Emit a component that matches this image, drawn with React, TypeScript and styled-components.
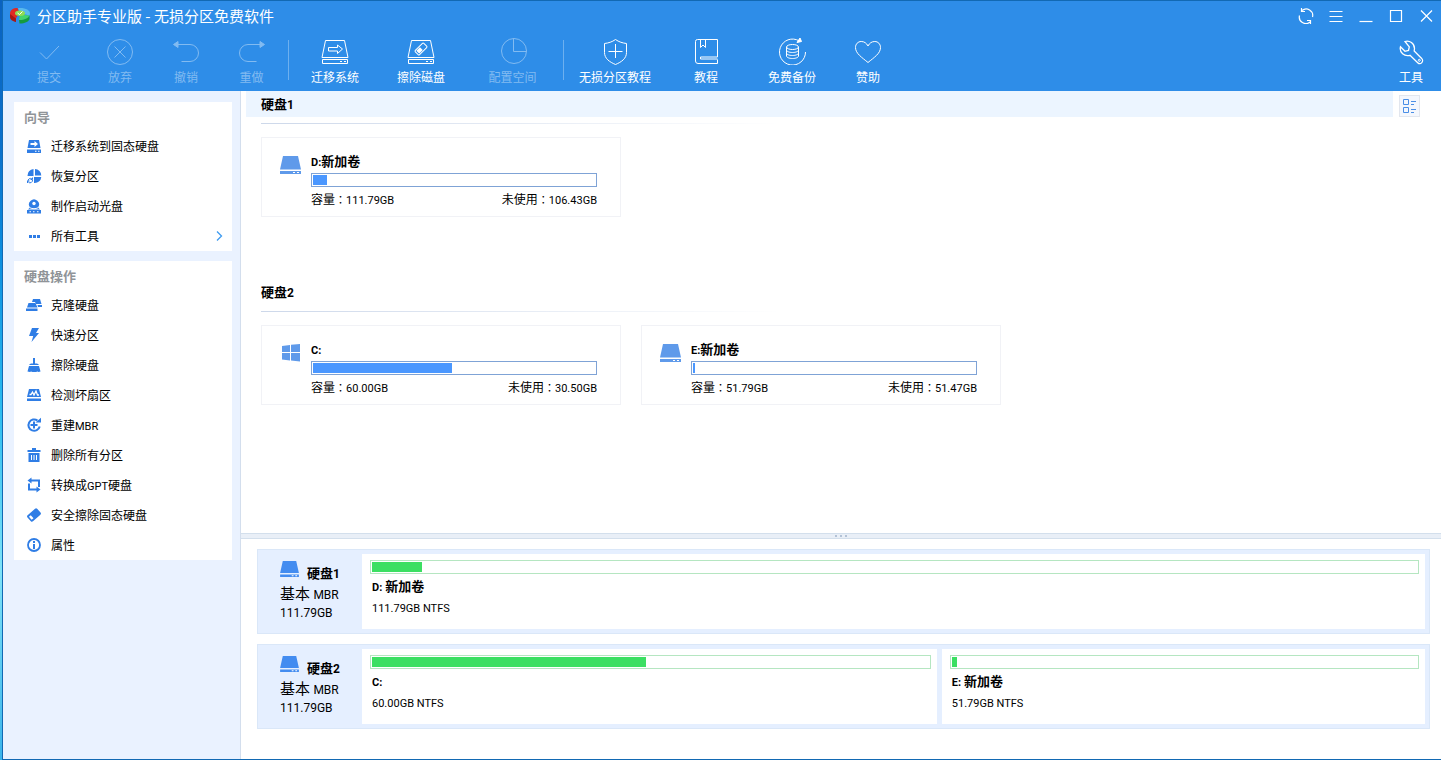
import React from "react";
import styled, { createGlobalStyle } from "styled-components";

const cjk = `"Noto Sans CJK SC", sans-serif`;
const latin = `Roboto, "Noto Sans CJK TC", sans-serif`;

const GlobalStyle = createGlobalStyle`
  * { box-sizing: border-box; }
  body { margin: 0; font-family: ${cjk}; font-size: 12px; line-height: 16px; color: #000; }
  h1, h2, h3, p, ul { margin: 0; padding: 0; font-size: inherit; }
  ul { list-style: none; }
  button { font: inherit; color: inherit; border: 0; background: none; padding: 0; margin: 0; }
  svg { display: block; flex: none; }
`;

const Desktop = styled.div`
  min-height: 100vh;
  display: flex;
  padding-left: 2px;
  background: linear-gradient(#0a62c0 0, #0a72cc 20%, #0d8fdf 34%, #2cbcf0 54%, #7fe3f8 75%, #3bb4ea 100%);
`;

const Window = styled.div`
  flex: 1;
  min-width: 0;
  display: flex;
  flex-direction: column;
  border: solid #1269b3;
  border-width: 1px 0 1px 1px;
  background: #fff;
`;

const Header = styled.header`
  background: #2e8de8;
  color: #fff;
`;

const TitleBar = styled.div`
  display: flex;
  align-items: center;
  height: 30px;
  padding-left: 6px;
`;

const Title = styled.h1`
  flex: 1;
  margin-left: 6px;
  font-size: 15px;
  line-height: 18px;
  font-weight: 400;
  white-space: nowrap;
`;

const WindowButton = styled.button`
  width: 30px;
  height: 30px;
  display: grid;
  place-items: center;
`;

const Toolbar = styled.div`
  display: flex;
  height: 60px;
  padding: 0 0 0 10px;
`;

const ToolButton = styled.button<{ $width: number }>`
  width: ${(p) => p.$width}px;
  padding-top: 6px;
  display: flex;
  flex-direction: column;
  align-items: center;
  gap: 4px;
  white-space: nowrap;
  &:disabled { color: #82bbf1; }
`;

const Divider = styled.span`
  width: 1px;
  height: 40px;
  margin: 9px 3px 0 2px;
  background: #6db0ef;
`;

const Spacer = styled.span`
  flex: 1;
`;

const Body = styled.div`
  flex: 1;
  display: flex;
`;

const Sidebar = styled.nav`
  flex: none;
  width: 238px;
  padding: 11px 8px 10px 11px;
  display: flex;
  flex-direction: column;
  gap: 10px;
  background: #eaf2ff;
  border-right: 1px solid #d3deed;
`;

const Panel = styled.section`
  background: #fff;
`;

const PanelTitle = styled.h2`
  height: 29px;
  padding-left: 10px;
  font-size: 13px;
  line-height: 29px;
  color: #909498;
`;

const SideButton = styled.button`
  width: 100%;
  height: 30px;
  padding: 0 8px 0 12px;
  display: flex;
  align-items: center;
  gap: 9px;
  text-align: left;
`;

const SideLabel = styled.span`
  flex: 1;
`;

const Latin = styled.span<{ $size?: number }>`
  font-family: ${latin};
  font-size: ${(p) => p.$size ?? 11}px;
  line-height: 1;
`;

const Main = styled.main`
  flex: 1;
  min-width: 0;
  display: flex;
  flex-direction: column;
`;

const Volumes = styled.div`
  flex: 1;
  display: flex;
  align-items: flex-start;
  padding: 0 21px 0 5px;
  gap: 6px;
`;

const VolumeList = styled.div`
  flex: 1;
`;

const DiskSection = styled.section`
  height: 188px;
`;

const DiskHeading = styled.h2<{ $active?: boolean }>`
  height: 26px;
  padding-left: 15px;
  font-size: 13px;
  line-height: 26px;
  background: ${(p) => (p.$active ? "#ecf5ff" : "transparent")};
`;

const Rule = styled.div`
  width: 520px;
  height: 1px;
  margin: 6px 0 13px 15px;
  background: linear-gradient(90deg, #cdd8ea, #fff);
`;

const Cards = styled.div`
  display: flex;
  gap: 20px;
  padding-left: 15px;
`;

const Card = styled.article`
  width: 360px;
  height: 80px;
  padding: 15px 23px 0 18px;
  display: flex;
  gap: 10px;
  border: 1px solid #f1f2f6;
`;

const CardIcon = styled.div`
  padding-top: 3px;
`;

const CardBody = styled.div`
  flex: 1;
`;

const CardTitle = styled.h3`
  height: 20px;
  line-height: 16px;
  font-size: 13px;
`;

const Track = styled.div<{ $green?: boolean }>`
  height: 14px;
  padding: 1px;
  background: #fff;
  border: 1px solid ${(p) => (p.$green ? "#b5e6c1" : "#7fa3d6")};
`;

const Fill = styled.div<{ $green?: boolean }>`
  height: 10px;
  min-width: ${(p) => (p.$green ? 5 : 1)}px;
  background: ${(p) => (p.$green ? "#3bdf62" : "#4a97ff")};
`;

const Facts = styled.div`
  display: flex;
  justify-content: space-between;
  margin-top: 4px;
`;

const ViewButton = styled.button`
  width: 21px;
  height: 22px;
  margin-top: 4px;
  display: grid;
  place-items: center;
  background: #f4f7fd;
  border: 1px solid #e2e6ee;
`;

const Splitter = styled.div`
  height: 6px;
  display: flex;
  align-items: center;
  justify-content: center;
  gap: 3px;
  background: #e9eff7;
  border: solid #d3dfec;
  border-width: 1px 0;
`;

const Grip = styled.span`
  width: 2px;
  height: 2px;
  background: #b3c2d6;
`;

const DiskMap = styled.div`
  display: flex;
  flex-direction: column;
  gap: 10px;
  padding: 10px 11px 30px 16px;
`;

const DiskRow = styled.section`
  height: 85px;
  display: flex;
  gap: 5px;
  padding: 4px 4px 4px 0;
  background: #e5efff;
  border: 1px solid #dae7f8;
`;

const DiskInfo = styled.div`
  width: 99px;
  padding: 7px 0 0 22px;
`;

const DiskName = styled.h3`
  display: flex;
  align-items: flex-start;
  gap: 8px;
  height: 22px;
  font-size: 13px;
  line-height: 24px;
`;

const DiskKind = styled.p`
  font-size: 15px;
  line-height: 20px;
  white-space: nowrap;
`;

const DiskSize = styled.p`
  font-family: ${latin};
  font-size: 12px;
  line-height: 20px;
`;

const Partition = styled.div<{ $share: number }>`
  flex: ${(p) => p.$share} 1 0;
  padding: 6px 6px 0 8px;
  background: #fff;
`;

const PartitionName = styled.h3`
  margin: 4px 0 0 2px;
  font-size: 13px;
  line-height: 16px;
`;

const PartitionSize = styled.p`
  margin: 7px 0 0 2px;
  font-family: ${latin};
  font-size: 11px;
`;

/* ---------- icons ---------- */

const LineIcon = ({ children }: { children: React.ReactNode }) => (
  <svg width="28" height="28" viewBox="0 0 28 28" fill="none" stroke="currentColor" strokeWidth="1">
    {children}
  </svg>
);

const DiskOutline = () => (
  <>
    <path d="M4.500 3.500h19l3.500 17H1zM1.500 22.500h25v4h-25z" />
    <path d="M19 24.500h2M23 24.500h2" />
  </>
);

const toolIcons: Record<string, React.ReactNode> = {
  check: <path d="M5 15.500l6.500 6.500L24 9" />,
  discard: <><circle cx="14" cy="15" r="12.500" /><path d="M8.500 9.500l11 11M19.500 9.500l-11 11" /></>,
  undo: <><path d="M5 7.500h13a8.500 8.500 0 0 1 0 17H9.500" /><path d="M1.500 7.500L6 4.500v6z" fill="currentColor" /></>,
  redo: <><path d="M23 7.500H10a8.500 8.500 0 0 0 0 17h8.500" /><path d="M26.500 7.500L22 4.500v6z" fill="currentColor" /></>,
  migrate: <><DiskOutline /><path d="M7.500 10.500h9V8l5 4-5 4.500v-2.500h-9z" /></>,
  wipe: (
    <>
      <DiskOutline />
      <g transform="rotate(-45 14 12)"><rect x="8" y="9" width="12" height="6" rx="1" /><path d="M10 10.500h4v3h-4z" fill="currentColor" /></g>
    </>
  ),
  space: <><circle cx="15" cy="14" r="12.500" /><path d="M14.500 1.500v13h13" /></>,
  shield: <path d="M14.500 2.500c3.500 2.500 7 3.500 11 4v9c0 6-5 9.500-11 12-6-2.500-11-6-11-12v-9c4-.5 7.500-1.500 11-4zM14.500 7v14M7.500 14.500h14" />,
  book: <path d="M25.500 2.500h-20a2 2 0 0 0-2 2v19.500a2.500 2.500 0 0 0 2.500 2.500h19.500v-4M25.500 2.500v17.500H8.500v2h17M8.500 2.500v8l2.500-2.500 2.500 2.500v-8" />,
  backup: (
    <>
      <path d="M21 3.800A13 13 0 1 0 27.500 15" />
      <path d="M23.500 4.500L19 5.500l3-4.500z" fill="currentColor" />
      <ellipse cx="14.500" cy="10" rx="6" ry="2.500" />
      <path d="M8.500 10v9c0 1.400 2.700 2.500 6 2.500s6-1.100 6-2.500v-9M8.500 13c0 1.400 2.700 2.500 6 2.500s6-1.100 6-2.500M8.500 16c0 1.400 2.700 2.500 6 2.500s6-1.100 6-2.500" />
    </>
  ),
  heart: <path d="M14 25.500C8 20.500 1.500 16.500 1.500 10.500 1.500 7 4 4.500 7.200 4.500c3 0 5.300 1.500 6.800 4.500 1.500-3 3.800-4.500 6.800-4.500 3.200 0 5.700 2.500 5.700 6 0 6-6.500 10-12.500 15z" />,
  wrench: (
    <>
      <path d="M8 4.500c4.500-1.500 9.500 2 9.500 7l-.3 2.500 7.500 7.500a2.800 2.800 0 0 1-4 4.200L13 18.300c-5.500 1.700-11-2.800-9.500-8.600l4.500 4.600 3.500-.8.800-3.700z" strokeWidth="1.300" />
      <circle cx="22.300" cy="23.300" r="1" />
    </>
  ),
};

const SolidIcon = ({ children }: { children: React.ReactNode }) => (
  <svg width="16" height="16" viewBox="0 0 16 16" fill="#2f7de5">
    {children}
  </svg>
);

const sideIcons: Record<string, React.ReactNode> = {
  migrate: (
    <>
      <path d="M3 2h10l1.500 8h-13zM1 11.500h14V15H1z" />
      <path d="M4.500 5h4V3l3.500 3-3.500 3V7h-4zM9 12.700h1.500v1H9zM12 12.700h1.500v1H12z" fill="#fff" />
    </>
  ),
  recover: (
    <>
      <path d="M7.500 1v7h-6a6.500 6.500 0 0 1 6-7zM9 1a6.500 6.500 0 0 1 6.300 6.500H9zM8 9h7.300A6.500 6.500 0 0 1 8 15z" />
      <path d="M2 13.500a2.500 2.500 0 0 1 4-2.500M6.500 12a2.500 2.500 0 0 1-4 2.300M6.500 9.500V11.500H4.500M1.500 15v-2h2" fill="none" stroke="#2f7de5" />
    </>
  ),
  disc: (
    <>
      <path d="M1 12h14v3.500H1zM4 9.500L2 11.500h12l-2-2a5 5 0 1 0-8 0z" />
      <circle cx="8" cy="5.500" r="1.700" fill="#fff" />
      <path d="M4 9.800c2.500 1.200 5.500 1.200 8 0" stroke="#fff" fill="none" />
      <path d="M3.500 13.300H5v1H3.500zM7 13.300h1.500v1H7zM11 13.300h1.500v1H11z" fill="#fff" />
    </>
  ),
  dots: <path d="M3 7h3v3H3zM7 7h3v3H7zM11 7h3v3h-3z" />,
  clone: (
    <>
      <path d="M7 2h7l1.500 5H10L9 5H6zM11.500 8H16v2h-4z" />
      <path d="M2.500 6h7l2 4.500H1zM0 11.500h11.500V14H0z" />
    </>
  ),
  bolt: <path d="M6 1h7l-3 5h3L5.500 15l1.700-6H3z" />,
  broom: <path d="M7 1h2v5.500h1c1.500 0 2.500.7 3 1.500H3c.5-.8 1.500-1.500 3-1.500h1zM3 9h10l1.500 5.500-2 .5-1-.5-1.500.5H6.500L5 14.500l-1 .5-2.500-.5z" />,
  sectors: (
    <>
      <path d="M3 2h10l2 8H1zM1 11.500h14V14H1z" />
      <path d="M3.500 7.500h1.500L6.500 5 8 8l2-4 1.500 4h1.500" fill="none" stroke="#fff" strokeWidth="1.300" />
    </>
  ),
  rebuild: (
    <>
      <path d="M11.500 3.500A5.700 5.700 0 1 0 13.700 9.500M4.500 8h7M8 4.500v7" fill="none" stroke="#2f7de5" strokeWidth="2" />
      <path d="M9.500 5.500h5.500V.7z" />
    </>
  ),
  trash: (
    <>
      <path d="M6 1h4v2h4.500v2h-13V3H6zM2.500 6h11v9h-11z" />
      <path d="M5.500 8v5M8 8v5M10.500 8v5" stroke="#fff" />
    </>
  ),
  convert: (
    <>
      <path d="M5 3.500h8V10M11 12.500H3V6.500" fill="none" stroke="#2f7de5" strokeWidth="2" />
      <path d="M5.500.5v6L1.500 3.500zM10.500 9.500v6l4-3z" />
    </>
  ),
  eraser: (
    <g transform="rotate(-42 8 8)">
      <rect x="1.500" y="4" width="13" height="8" rx="1.500" />
      <path d="M3 6h2.500v4H3z" fill="#fff" />
    </g>
  ),
  info: (
    <>
      <circle cx="8" cy="8" r="6" fill="none" stroke="#2f7de5" strokeWidth="1.800" />
      <path d="M7 4h2v2H7zM7 7h2v5H7z" />
    </>
  ),
};

const DriveIcon = ({ width, color }: { width: number; color: string }) => (
  <svg width={width} height={width - 2} viewBox="0 0 21 19" fill={color}>
    <path d="M3 0h15l3 13.500H0zM0 15h21v3H0z" />
    <path d="M13 16h2v1h-2zM17 16h2v1h-2z" fill="#fff" />
  </svg>
);

const WindowsIcon = () => (
  <svg width="21" height="19" viewBox="0 0 21 19" fill="#5f9aea">
    <path d="M2 2l8-1v7H2zM11 .8L20 0v8h-9zM2 9h8v7.500l-8-1zM11 9h9v8.500l-9-1z" />
  </svg>
);

const Logo = () => (
  <svg width="22" height="18" viewBox="0 0 22 18">
    <path d="M1 6.500C1 3 4 1 8.500 1l2 5L6 12.500C3 11.500 1 9.500 1 6.500z" fill="#e02a23" />
    <path d="M1 7v3c0 2.500 2.500 4.500 6 5v-3.500z" fill="#a81815" />
    <path d="M9 1c7-.7 12 1.800 12 5.500 0 .7-.2 1.500-.6 2L11 6z" fill="#58b9ec" />
    <path d="M20.500 8.500L11 7.500l-1 5.500c5 .5 10-1.500 10.500-4.500z" fill="#43d46c" />
    <path d="M20.500 8.500v3.500c-1 3-5.500 4.700-10 4.500l-.5-3.500c5 .3 9-1.500 10.500-4.500z" fill="#159b3e" />
    <ellipse cx="11" cy="6.300" rx="5" ry="2.700" fill="#8fdc52" />
    <path d="M8.500 6l2 1.500 3-3" fill="none" stroke="#fff" />
  </svg>
);

/* ---------- data ---------- */

type Tool = { icon: string; label: string; width: number; off?: boolean };

const toolGroups: Tool[][] = [
  [
    { icon: "check", label: "提交", width: 72, off: true },
    { icon: "discard", label: "放弃", width: 70, off: true },
    { icon: "undo", label: "撤销", width: 62, off: true },
    { icon: "redo", label: "重做", width: 69, off: true },
  ],
  [
    { icon: "migrate", label: "迁移系统", width: 86 },
    { icon: "wipe", label: "擦除磁盘", width: 86 },
    { icon: "space", label: "配置空间", width: 97, off: true },
  ],
  [
    { icon: "shield", label: "无损分区教程", width: 96 },
    { icon: "book", label: "教程", width: 86 },
    { icon: "backup", label: "免费备份", width: 86 },
    { icon: "heart", label: "赞助", width: 66 },
  ],
];

const sidePanels: { title: string; items: { icon: string; label: React.ReactNode; more?: boolean }[] }[] = [
  {
    title: "向导",
    items: [
      { icon: "migrate", label: "迁移系统到固态硬盘" },
      { icon: "recover", label: "恢复分区" },
      { icon: "disc", label: "制作启动光盘" },
      { icon: "dots", label: "所有工具", more: true },
    ],
  },
  {
    title: "硬盘操作",
    items: [
      { icon: "clone", label: "克隆硬盘" },
      { icon: "bolt", label: "快速分区" },
      { icon: "broom", label: "擦除硬盘" },
      { icon: "sectors", label: "检测坏扇区" },
      { icon: "rebuild", label: <>重建<Latin>MBR</Latin></> },
      { icon: "trash", label: "删除所有分区" },
      { icon: "convert", label: <>转换成<Latin>GPT</Latin>硬盘</> },
      { icon: "eraser", label: "安全擦除固态硬盘" },
      { icon: "info", label: "属性" },
    ],
  },
];

type Volume = { letter: string; name: string; size: number; free: number; share: number; system?: boolean };

const disks: { id: number; volumes: Volume[] }[] = [
  { id: 1, volumes: [{ letter: "D:", name: "新加卷", size: 111.79, free: 106.43, share: 1 }] },
  {
    id: 2,
    volumes: [
      { letter: "C:", name: "", size: 60, free: 30.5, share: 49, system: true },
      { letter: "E:", name: "新加卷", size: 51.79, free: 51.47, share: 41 },
    ],
  },
];

const Usage = ({ volume, green }: { volume: Volume; green?: boolean }) => {
  const used = ((volume.size - volume.free) / volume.size) * 100;
  return (
    <Track $green={green} role="progressbar" aria-label={`${volume.letter} 已使用`} aria-valuenow={Math.round(used)}>
      <Fill $green={green} style={{ width: `${used}%` }} />
    </Track>
  );
};

const VolumeCard = ({ volume }: { volume: Volume }) => (
  <Card>
    <CardIcon>{volume.system ? <WindowsIcon /> : <DriveIcon width={21} color="#5f9aea" />}</CardIcon>
    <CardBody>
      <CardTitle><Latin>{volume.letter}</Latin>{volume.name}</CardTitle>
      <Usage volume={volume} />
      <Facts>
        <span>容量<Latin>：{volume.size.toFixed(2)}GB</Latin></span>
        <span>未使用<Latin>：{volume.free.toFixed(2)}GB</Latin></span>
      </Facts>
    </CardBody>
  </Card>
);

const WindowGlyph = ({ d }: { d: string }) => (
  <svg width="16" height="16" viewBox="0 0 16 16" fill="none" stroke="#fff" strokeWidth="1.200">
    <path d={d} />
  </svg>
);

export default function App() {
  return (
    <Desktop>
      <GlobalStyle />
      <Window>
        <Header>
          <TitleBar>
            <Logo />
            <Title>分区助手专业版 - 无损分区免费软件</Title>
            <WindowButton aria-label="刷新">
              <WindowGlyph d="M4 2.500A6.500 6.500 0 0 1 14.500 9M12 14A6.500 6.500 0 0 1 1.500 7.500M3.500 0v3.500h3.500M12.500 16v-3.500H9" />
            </WindowButton>
            <WindowButton aria-label="菜单"><WindowGlyph d="M1.500 3.500h13M1.500 8.500h13M1.500 13.500h13" /></WindowButton>
            <WindowButton aria-label="最小化"><WindowGlyph d="M1.500 13.500h13" /></WindowButton>
            <WindowButton aria-label="最大化"><WindowGlyph d="M2.500 2.500h11v11h-11z" /></WindowButton>
            <WindowButton aria-label="关闭"><WindowGlyph d="M3 2.500l11 11M14 2.500l-11 11" /></WindowButton>
          </TitleBar>
          <Toolbar>
            {toolGroups.map((group, i) => (
              <React.Fragment key={i}>
                {i > 0 && <Divider />}
                {group.map((t) => (
                  <ToolButton key={t.label} $width={t.width} disabled={t.off}>
                    <LineIcon>{toolIcons[t.icon]}</LineIcon>
                    {t.label}
                  </ToolButton>
                ))}
              </React.Fragment>
            ))}
            <Spacer />
            <ToolButton $width={60}>
              <LineIcon>{toolIcons.wrench}</LineIcon>
              工具
            </ToolButton>
          </Toolbar>
        </Header>

        <Body>
          <Sidebar>
            {sidePanels.map((panel) => (
              <Panel key={panel.title}>
                <PanelTitle>{panel.title}</PanelTitle>
                <ul>
                  {panel.items.map((item) => (
                    <li key={item.icon}>
                      <SideButton>
                        <SolidIcon>{sideIcons[item.icon]}</SolidIcon>
                        <SideLabel>{item.label}</SideLabel>
                        {item.more && (
                          <svg width="10" height="10" viewBox="0 0 10 10" fill="none" stroke="#3f9bf0" strokeWidth="1.300">
                            <path d="M3 .5L7.500 5 3 9.500" />
                          </svg>
                        )}
                      </SideButton>
                    </li>
                  ))}
                </ul>
              </Panel>
            ))}
          </Sidebar>

          <Main>
            <Volumes>
              <VolumeList>
                {disks.map((disk) => (
                  <DiskSection key={disk.id}>
                    <DiskHeading $active={disk.id === 1}>硬盘<Latin $size={12}>{disk.id}</Latin></DiskHeading>
                    <Rule />
                    <Cards>
                      {disk.volumes.map((v) => <VolumeCard key={v.letter} volume={v} />)}
                    </Cards>
                  </DiskSection>
                ))}
              </VolumeList>
              <ViewButton aria-label="切换视图">
                <svg width="15" height="16" viewBox="0 0 15 16" fill="none" stroke="#4a8ee6">
                  <path d="M1.500 1.500h5v5h-5zM1.500 9.500h5v5h-5zM9 3.500h5M9 6.500h3M9 11.500h5M9 14.500h3" />
                </svg>
              </ViewButton>
            </Volumes>
            <Splitter role="separator"><Grip /><Grip /><Grip /></Splitter>
            <DiskMap>
              {disks.map((disk) => (
                <DiskRow key={disk.id}>
                  <DiskInfo>
                    <DiskName>
                      <DriveIcon width={19} color="#438cf0" />
                      <span>硬盘<Latin $size={12}>{disk.id}</Latin></span>
                    </DiskName>
                    <DiskKind>基本 <Latin $size={12}>MBR</Latin></DiskKind>
                    <DiskSize>111.79GB</DiskSize>
                  </DiskInfo>
                  {disk.volumes.map((v) => (
                    <Partition key={v.letter} $share={v.share}>
                      <Usage volume={v} green />
                      <PartitionName><Latin>{v.letter}</Latin> {v.name}</PartitionName>
                      <PartitionSize>{v.size.toFixed(2)}GB NTFS</PartitionSize>
                    </Partition>
                  ))}
                </DiskRow>
              ))}
            </DiskMap>
          </Main>
        </Body>
      </Window>
    </Desktop>
  );
}
